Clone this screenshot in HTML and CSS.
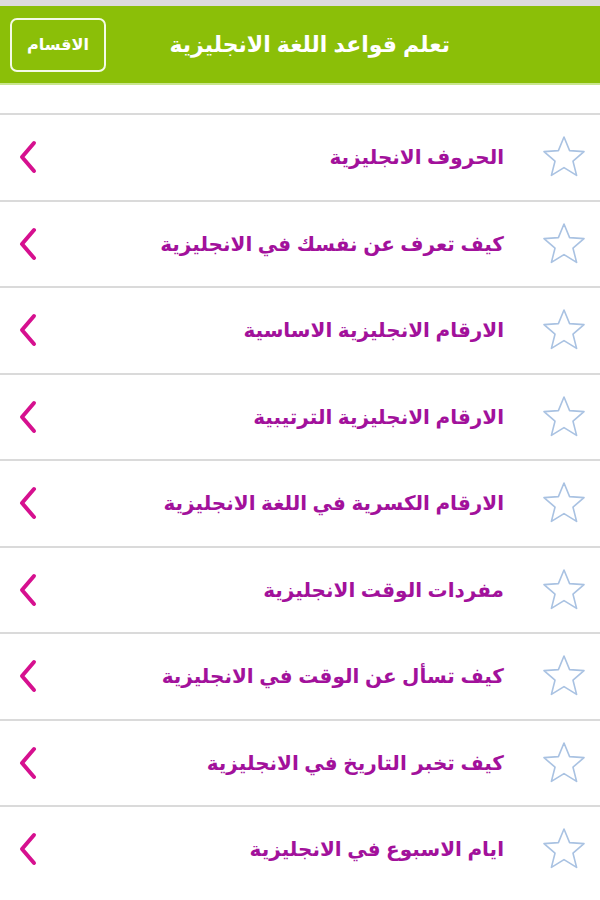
FILE: index.html
```html
<!DOCTYPE html>
<html lang="ar" dir="rtl">
<head>
	<meta charset="UTF-8">
	<title>تعلم قواعد اللغة الانجليزية</title>
	<link rel="stylesheet" href="styles.css">
</head>
<body>
	<div class="bandeau"></div>
	<div class="entete">
		<h1>تعلم قواعد اللغة الانجليزية</h1>
		<button class="sections">الاقسام</button>
	</div>

	<ul class="liste">
		<li><span class="etoile"><svg viewBox="0 0 48 48" width="48" height="48"><path d="M24 4 L29.6 17.6 L44 18.6 L33 28.2 L36.6 42.4 L24 34.6 L11.4 42.4 L15 28.2 L4 18.6 L18.4 17.6 Z"/></svg></span><span class="titre">الحروف الانجليزية</span><span class="fleche"><svg viewBox="0 0 24 40" width="24" height="40"><path d="M18 6 L6 20 L18 34"/></svg></span></li>
		<li><span class="etoile"><svg viewBox="0 0 48 48" width="48" height="48"><path d="M24 4 L29.6 17.6 L44 18.6 L33 28.2 L36.6 42.4 L24 34.6 L11.4 42.4 L15 28.2 L4 18.6 L18.4 17.6 Z"/></svg></span><span class="titre">كيف تعرف عن نفسك في الانجليزية</span><span class="fleche"><svg viewBox="0 0 24 40" width="24" height="40"><path d="M18 6 L6 20 L18 34"/></svg></span></li>
		<li><span class="etoile"><svg viewBox="0 0 48 48" width="48" height="48"><path d="M24 4 L29.6 17.6 L44 18.6 L33 28.2 L36.6 42.4 L24 34.6 L11.4 42.4 L15 28.2 L4 18.6 L18.4 17.6 Z"/></svg></span><span class="titre">الارقام الانجليزية الاساسية</span><span class="fleche"><svg viewBox="0 0 24 40" width="24" height="40"><path d="M18 6 L6 20 L18 34"/></svg></span></li>
		<li><span class="etoile"><svg viewBox="0 0 48 48" width="48" height="48"><path d="M24 4 L29.6 17.6 L44 18.6 L33 28.2 L36.6 42.4 L24 34.6 L11.4 42.4 L15 28.2 L4 18.6 L18.4 17.6 Z"/></svg></span><span class="titre">الارقام الانجليزية الترتيبية</span><span class="fleche"><svg viewBox="0 0 24 40" width="24" height="40"><path d="M18 6 L6 20 L18 34"/></svg></span></li>
		<li><span class="etoile"><svg viewBox="0 0 48 48" width="48" height="48"><path d="M24 4 L29.6 17.6 L44 18.6 L33 28.2 L36.6 42.4 L24 34.6 L11.4 42.4 L15 28.2 L4 18.6 L18.4 17.6 Z"/></svg></span><span class="titre">الارقام الكسرية في اللغة الانجليزية</span><span class="fleche"><svg viewBox="0 0 24 40" width="24" height="40"><path d="M18 6 L6 20 L18 34"/></svg></span></li>
		<li><span class="etoile"><svg viewBox="0 0 48 48" width="48" height="48"><path d="M24 4 L29.6 17.6 L44 18.6 L33 28.2 L36.6 42.4 L24 34.6 L11.4 42.4 L15 28.2 L4 18.6 L18.4 17.6 Z"/></svg></span><span class="titre">مفردات الوقت الانجليزية</span><span class="fleche"><svg viewBox="0 0 24 40" width="24" height="40"><path d="M18 6 L6 20 L18 34"/></svg></span></li>
		<li><span class="etoile"><svg viewBox="0 0 48 48" width="48" height="48"><path d="M24 4 L29.6 17.6 L44 18.6 L33 28.2 L36.6 42.4 L24 34.6 L11.4 42.4 L15 28.2 L4 18.6 L18.4 17.6 Z"/></svg></span><span class="titre">كيف تسأل عن الوقت في الانجليزية</span><span class="fleche"><svg viewBox="0 0 24 40" width="24" height="40"><path d="M18 6 L6 20 L18 34"/></svg></span></li>
		<li><span class="etoile"><svg viewBox="0 0 48 48" width="48" height="48"><path d="M24 4 L29.6 17.6 L44 18.6 L33 28.2 L36.6 42.4 L24 34.6 L11.4 42.4 L15 28.2 L4 18.6 L18.4 17.6 Z"/></svg></span><span class="titre">كيف تخبر التاريخ في الانجليزية</span><span class="fleche"><svg viewBox="0 0 24 40" width="24" height="40"><path d="M18 6 L6 20 L18 34"/></svg></span></li>
		<li><span class="etoile"><svg viewBox="0 0 48 48" width="48" height="48"><path d="M24 4 L29.6 17.6 L44 18.6 L33 28.2 L36.6 42.4 L24 34.6 L11.4 42.4 L15 28.2 L4 18.6 L18.4 17.6 Z"/></svg></span><span class="titre">ايام الاسبوع في الانجليزية</span><span class="fleche"><svg viewBox="0 0 24 40" width="24" height="40"><path d="M18 6 L6 20 L18 34"/></svg></span></li>
	</ul>
</body>
</html>
```

FILE: styles.css
```css
body {
	margin: 0;
	background: #fff;
	font-family: "Liberation Sans", "DejaVu Sans", sans-serif;
	overflow: hidden;
}

.bandeau {
	height: 6px;
	background: #dddbdd;
}

.entete {
	height: 77px;
	background: #8bbf08;
	border-bottom: 2px solid #c9e68f;
	display: flex;
	align-items: center;
	padding: 0 150px 0 10px;
}

h1 {
	flex: 1;
	margin: 0;
	color: #fff;
	font-size: 22px;
	font-weight: bold;
	text-align: right;
}

.sections {
	width: 96px;
	height: 54px;
	margin: 0;
	background: transparent;
	border: 2px solid #f4fbe6;
	border-radius: 7px;
	color: #fff;
	font-family: inherit;
	font-size: 16px;
	font-weight: bold;
}

.liste {
	list-style: none;
	margin: 28px 0 0;
	padding: 0;
}

.liste li {
	height: 84.5px;
	border-top: 2px solid #dadada;
	display: flex;
	align-items: center;
	padding: 0 12px 0 16px;
}

.etoile {
	display: flex;
}

.etoile path {
	fill: #fff;
	stroke: #a9c2e2;
	stroke-width: 1.6;
	stroke-linejoin: round;
}

.titre {
	flex: 1;
	margin-right: 36px;
	color: #a2119b;
	font-size: 20px;
	font-weight: bold;
}

.fleche {
	display: flex;
}

.fleche path {
	fill: none;
	stroke: #d6108f;
	stroke-width: 4;
	stroke-linecap: round;
	stroke-linejoin: round;
}
```
